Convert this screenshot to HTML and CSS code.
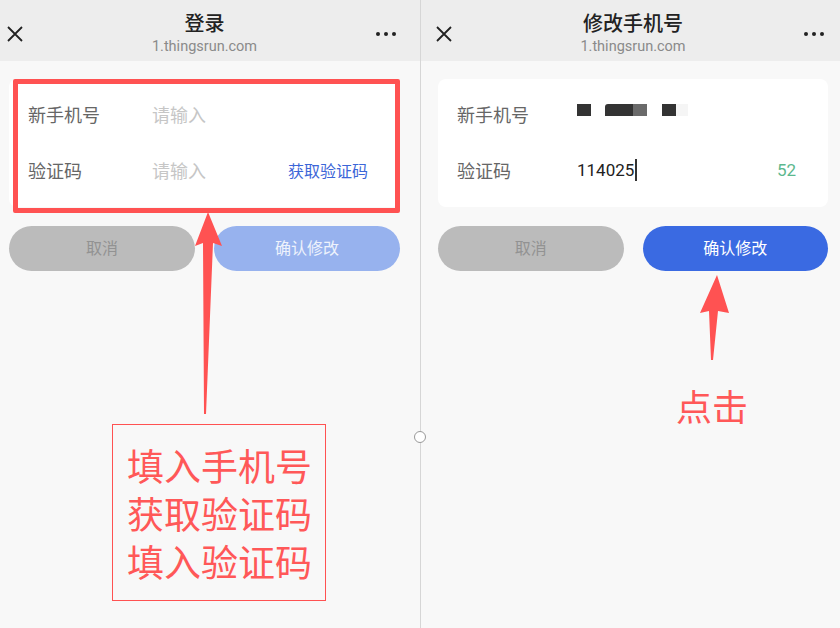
FILE: index.html
```html
<!DOCTYPE html>
<html lang="zh-CN">

<head>
    <meta charset="UTF-8">
    <meta name="viewport" content="width=device-width, initial-scale=1.0">
    <title>修改手机号</title>
    <link rel="stylesheet" href="styles.css">
</head>

<body>
    <div class="screen">
        <!-- step 1: fill in the form -->
        <section class="panel panel-left">
            <header class="topbar">
                <span class="close">
                    <svg width="16" height="16" viewBox="0 0 16 16"><path d="M1 1L15 15M15 1L1 15" stroke="#222" stroke-width="1.8" fill="none"/></svg>
                </span>
                <div class="title-wrap">
                    <div class="title">登录</div>
                    <div class="url">1.thingsrun.com</div>
                </div>
                <span class="more"><i></i><i></i><i></i></span>
            </header>
            <div class="content">
                <div class="card card-login card-marked">
                    <div class="row">
                        <span class="label">新手机号</span>
                        <span class="placeholder">请输入</span>
                    </div>
                    <div class="row">
                        <span class="label">验证码</span>
                        <span class="placeholder">请输入</span>
                        <span class="code-link">获取验证码</span>
                    </div>
                </div>
                <div class="actions">
                    <button class="btn btn-cancel">取消</button>
                    <button class="btn btn-confirm is-disabled">确认修改</button>
                </div>
            </div>
            <div class="note-box">填入手机号<br>获取验证码<br>填入验证码</div>
        </section>

        <div class="divider"><span class="knob"></span></div>

        <!-- step 2: submit -->
        <section class="panel panel-right">
            <header class="topbar">
                <span class="close">
                    <svg width="16" height="16" viewBox="0 0 16 16"><path d="M1 1L15 15M15 1L1 15" stroke="#222" stroke-width="1.8" fill="none"/></svg>
                </span>
                <div class="title-wrap">
                    <div class="title">修改手机号</div>
                    <div class="url">1.thingsrun.com</div>
                </div>
                <span class="more"><i></i><i></i><i></i></span>
            </header>
            <div class="content">
                <div class="card">
                    <div class="row">
                        <span class="label">新手机号</span>
                        <span class="masked">
                            <i class="m1"></i><i class="m2"></i><i class="m3"></i><i class="m4"></i><i class="m5"></i>
                        </span>
                    </div>
                    <div class="row">
                        <span class="label">验证码</span>
                        <span class="value">114025<i class="caret"></i></span>
                        <span class="countdown">52</span>
                    </div>
                </div>
                <div class="actions">
                    <button class="btn btn-cancel">取消</button>
                    <button class="btn btn-confirm">确认修改</button>
                </div>
            </div>
            <div class="note-text">点击</div>
        </section>

        <svg class="arrows" width="840" height="628" viewBox="0 0 840 628">
            <polygon points="208,212 222,246 213,243 206,414 204,414 203,243 195,246" fill="#ff5252"/>
            <polygon points="717,275 729,313 718,311 713,360 711,360 709,311 700,313" fill="#ff5252"/>
        </svg>
    </div>
</body>

</html>
```

FILE: styles.css
```css
body {
    margin: 0;
    font-family: Roboto, "Noto Sans CJK SC", sans-serif;
    background-color: #f8f8f8;
}

.screen {
    position: relative;
    display: flex;
    width: 840px;
    height: 628px;
    overflow: hidden;
}

.panel {
    position: relative;
    background-color: #f8f8f8;
}

.panel-left {
    width: 420px;
    --pad-l: 9px;
    --pad-r: 20px;
}

.panel-right {
    width: 419px;
    --pad-l: 17px;
    --pad-r: 12px;
}

.divider {
    position: relative;
    z-index: 2;
    width: 1px;
    background-color: #d6d6d6;
}

.knob {
    position: absolute;
    left: -6px;
    top: 431px;
    width: 10px;
    height: 10px;
    border: 1.5px solid #999;
    border-radius: 50%;
    background-color: #fff;
}

/* top bar */
.topbar {
    display: grid;
    grid-template-columns: 1fr auto 1fr;
    align-items: center;
    height: 61px;
    box-sizing: border-box;
    padding: 12px var(--pad-r) 6px var(--pad-l);
    background-color: #ededed;
}

.close {
    justify-self: start;
    display: flex;
    margin-left: -2px;
}

.more {
    justify-self: end;
    display: flex;
    gap: 3.5px;
    margin-right: 4px;
}

.more i {
    width: 4.5px;
    height: 4.5px;
    border-radius: 50%;
    background-color: #222;
}

.title-wrap {
    text-align: center;
}

.title {
    font-size: 20px;
    line-height: 24px;
    font-weight: 500;
    color: #222;
}

.url {
    margin-top: 2px;
    font-size: 14.5px;
    line-height: 18px;
    color: #8a8a8a;
}

/* form */
.content {
    padding: 18px var(--pad-r) 0 var(--pad-l);
}

.card {
    position: relative;
    padding: 7px 32px 9px 19px;
    background-color: #fff;
    border-radius: 8px;
}

.card-marked::after {
    content: "";
    position: absolute;
    left: 4px;
    right: 0;
    top: 0;
    bottom: -6px;
    border: 5px solid #ff5252;
    border-radius: 2px;
}

.row {
    display: flex;
    align-items: center;
    height: 56px;
}

.label {
    width: 120px;
    flex-shrink: 0;
    font-size: 18px;
    color: #666;
}

.card-login .label {
    width: 124px;
}

.placeholder {
    flex: 1;
    font-size: 18px;
    color: #c6c6c6;
}

.code-link {
    font-size: 16px;
    color: #3c66d8;
}

.value {
    flex: 1;
    display: flex;
    align-items: center;
    font-size: 17px;
    color: #222;
}

.caret {
    width: 1.5px;
    height: 22px;
    margin-left: 1px;
    background-color: #333;
}

.countdown {
    font-size: 17px;
    color: #5cb88e;
}

.masked {
    display: flex;
    align-items: center;
    height: 12px;
    margin-bottom: 8px;
}

.masked i {
    height: 12px;
    background-color: #333;
}

.masked .m1 {
    width: 14px;
    margin-right: 14px;
}

.masked .m2 {
    width: 28px;
    border-top-left-radius: 3px;
}

.masked .m3 {
    width: 14px;
    margin-right: 15px;
    background-color: #6a6a6a;
}

.masked .m4 {
    width: 14px;
}

.masked .m5 {
    width: 12px;
    background-color: #f5f5f5;
}

/* buttons */
.actions {
    display: flex;
    gap: 19px;
    margin-top: 19px;
}

.btn {
    flex: 1;
    height: 45px;
    padding: 0 0 4px;
    border: none;
    border-radius: 23px;
    font-family: inherit;
    font-size: 16px;
    cursor: pointer;
}

.btn-cancel {
    background-color: #bbbbbb;
    color: #929292;
}

.btn-confirm {
    background-color: #3a6ae2;
    color: #fff;
}

.btn-confirm.is-disabled {
    background-color: #97b2ee;
    color: #eef2fc;
}

/* annotations */
.note-box {
    position: absolute;
    left: 112px;
    top: 424px;
    width: 214px;
    height: 177px;
    box-sizing: border-box;
    padding: 16px 0 0 14px;
    border: 1.5px solid #ff5252;
    white-space: nowrap;
    font-family: "Noto Sans CJK SC", sans-serif;
    font-size: 37px;
    line-height: 48px;
    color: #ff5858;
}

.note-text {
    position: absolute;
    left: 255px;
    top: 382px;
    font-family: "Noto Sans CJK SC", sans-serif;
    font-size: 36px;
    line-height: 46px;
    color: #ff5858;
}

.arrows {
    position: absolute;
    left: 0;
    top: 0;
    pointer-events: none;
}
```
